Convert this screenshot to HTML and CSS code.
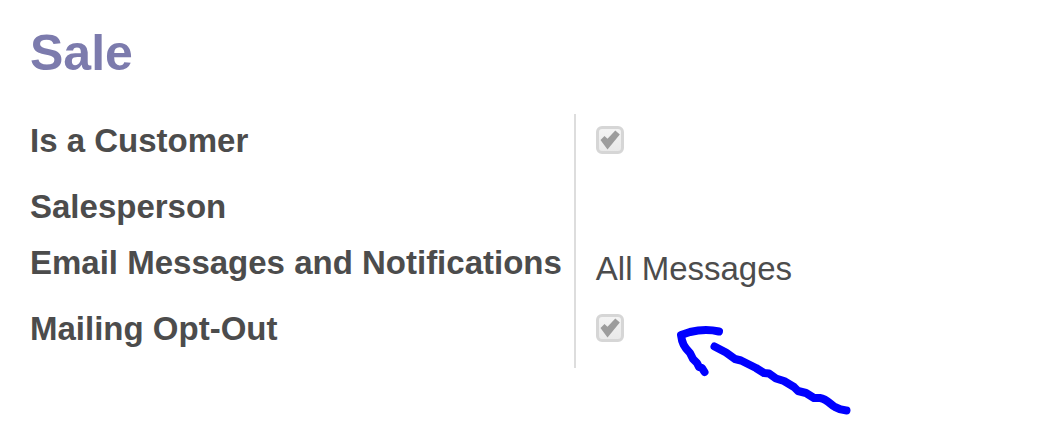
FILE: index.html
```html
<!DOCTYPE html>
<html lang="en">
<head>
<meta charset="utf-8">
<title>Sale</title>
<link rel="stylesheet" href="styles.css">
</head>
<body>
<main class="sheet">
  <h1 class="title">Sale</h1>
  <div class="group">
    <div class="label-cell"><label for="customer">Is a Customer</label></div>
    <div class="value-cell">
      <span class="check">
        <input type="checkbox" id="customer" checked disabled>
        <svg class="tick" viewBox="0 0 28 28" aria-hidden="true"><path d="M4.500 14 8.500 10 11.500 12.800 19.300 4.500 23.800 8.500 11.500 23.500Z"/></svg>
      </span>
    </div>
    <div class="label-cell short">Salesperson</div>
    <div class="value-cell short"></div>
    <div class="label-cell">Email Messages and Notifications</div>
    <div class="value-cell">All Messages</div>
    <div class="label-cell"><label for="optout">Mailing Opt-Out</label></div>
    <div class="value-cell">
      <span class="check">
        <input type="checkbox" id="optout" checked disabled>
        <svg class="tick" viewBox="0 0 28 28" aria-hidden="true"><path d="M4.500 14 8.500 10 11.500 12.800 19.300 4.500 23.800 8.500 11.500 23.500Z"/></svg>
      </span>
      <svg class="arrow" viewBox="0 0 190 105" aria-hidden="true">
        <path d="M49 16.500C39 14 28 15 20 17L11 20C12 28 14 32 20 38L23 44 27 48 29 52 32 53 34.500 57"/>
        <path d="M44.500 31.500 56 37.500 65 44 71 45.500 86 53 94 58 99 58.500 106 63.500 114 66 124 72 128 76 136 78 144 83 150 83C157 84 161 90 165 92Q170 95 176.500 95.500"/>
      </svg>
    </div>
  </div>
</main>
</body>
</html>
```
FILE: styles.css
```css
body {
  min-height: 100vh;
  margin: 0;
  background: #fff;
  color: #4c4c4c;
  font-family: "Liberation Sans", Arial, sans-serif;
  font-size: 33px;
  line-height: 44px;
}

.sheet {
  box-sizing: border-box;
  min-height: 100vh;
  padding: 25px 30px;
}

.title {
  margin: 0 0 33px;
  color: #7c7bad;
  font-size: 50px;
  line-height: 56px;
}

.group {
  display: grid;
  grid-template-columns: max-content 1fr;
}

.label-cell {
  box-sizing: border-box;
  min-height: 66px;
  padding: 5px 12px 0 0;
  font-weight: bold;
}

.value-cell {
  box-sizing: border-box;
  position: relative;
  min-height: 66px;
  padding: 11px 0 0 20px;
  border-left: 2px solid #ddd;
}

.label-cell.short,
.value-cell.short {
  min-height: 56px;
}

.check {
  display: block;
  position: relative;
  width: 28px;
  height: 28px;
  margin-top: 1px;
}

.check input {
  appearance: none;
  box-sizing: border-box;
  display: block;
  width: 28px;
  height: 28px;
  margin: 0;
  border: 3px solid #d6d6d6;
  border-radius: 6px;
  background: linear-gradient(#f3f3f3, #e9e9e9);
}

.tick {
  position: absolute;
  inset: 0;
  fill: #9c9c9c;
}

/* Hand-drawn pointer laid over the form */
.arrow {
  position: absolute;
  left: 94px;
  top: 13px;
  width: 190px;
  height: 105px;
  fill: none;
  stroke: #00f;
  stroke-width: 8;
  stroke-linecap: round;
  stroke-linejoin: round;
}
```
